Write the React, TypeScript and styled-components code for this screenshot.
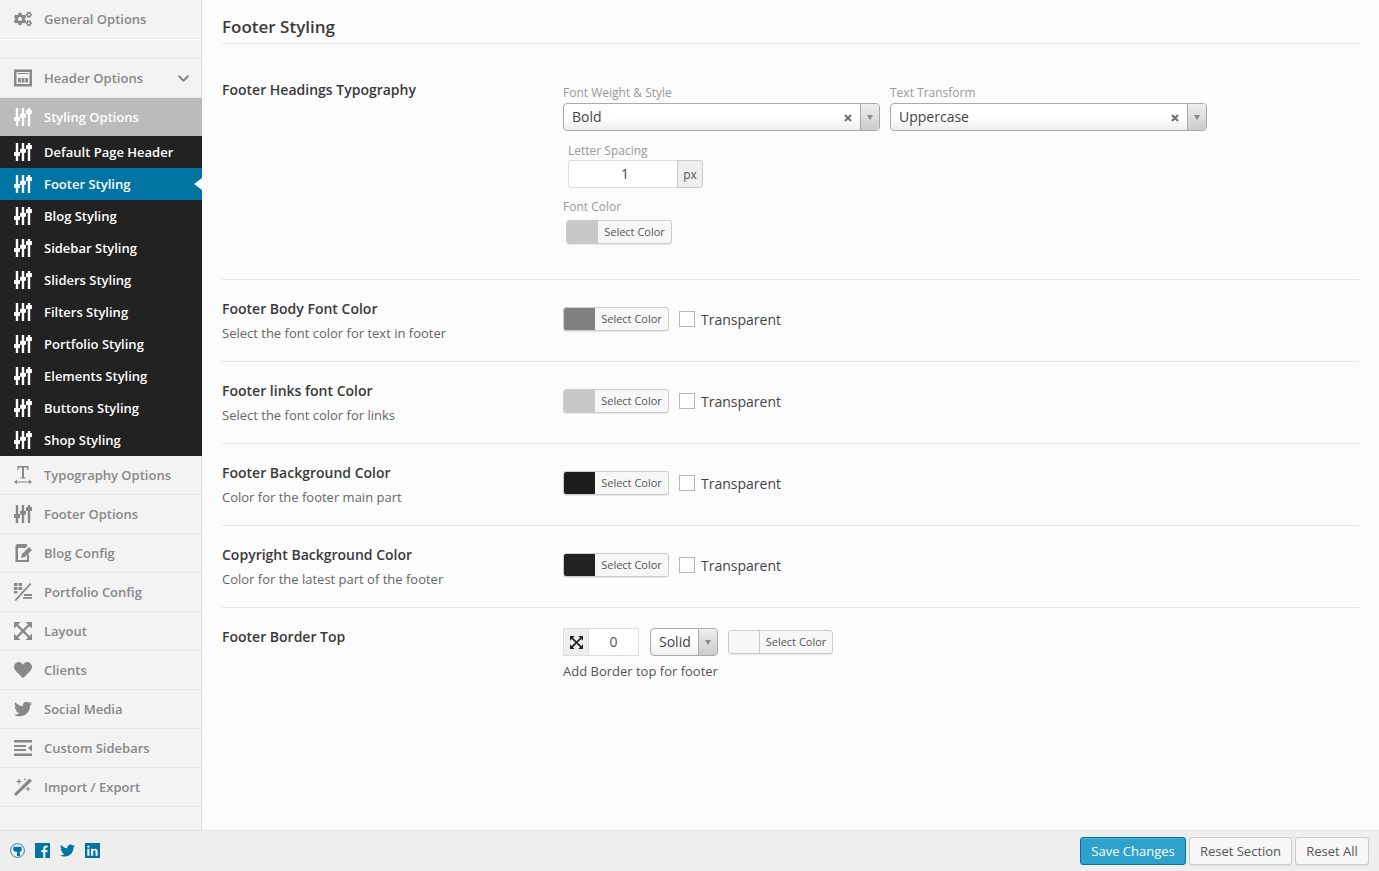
import React from "react";
import styled, { createGlobalStyle } from "styled-components";
import { FaCogs, FaHeart, FaTwitter, FaChevronDown } from "react-icons/fa";

const GlobalStyle = createGlobalStyle`
  * { box-sizing: border-box; }
  html, body { margin: 0; padding: 0; }
  body { font-family: "Open Sans", sans-serif; background: #fcfcfc; color: #444; }
`;

const Page = styled.div`
  width: 1379px;
  height: 871px;
  display: flex;
  flex-direction: column;
  overflow: hidden;
`;

const Top = styled.div`
  display: flex;
  height: 830px;
`;

const Sidebar = styled.nav`
  width: 202px;
  flex-shrink: 0;
  background: #f3f3f3;
  border-right: 1px solid #dcdcdc;
  display: flex;
  flex-direction: column;
`;

const Item = styled.div`
  height: 39px;
  margin-right: -1px;
  padding-left: 14px;
  padding-right: 11px;
  display: flex;
  align-items: center;
  gap: 12px;
  font-size: 13px;
  font-weight: 600;
  color: #888;
  border-bottom: 1px solid #e8e8e8;
  border-right: 1px solid #dcdcdc;
  & > svg:first-child { width: 18px; height: 18px; flex-shrink: 0; }
`;

const Spacer = styled.div`
  height: 20px;
  border-top: 1px solid #fafafa;
  border-bottom: 1px solid #e8e8e8;
`;

const Chevron = styled.span`
  margin-left: auto;
  display: flex;
  color: #888;
  font-size: 13px;
`;

const ActiveParent = styled.div`
  height: 38px;
  margin-right: -1px;
  padding-left: 14px;
  display: flex;
  align-items: center;
  gap: 12px;
  font-size: 13px;
  font-weight: 600;
  color: #fff;
  background: #bbb;
  & > svg { width: 18px; height: 18px; flex-shrink: 0; }
`;

const SubItem = styled.div<{ $active?: boolean }>`
  position: relative;
  height: 32px;
  margin-right: -1px;
  padding-left: 14px;
  display: flex;
  align-items: center;
  gap: 12px;
  font-size: 13px;
  font-weight: 600;
  color: #fff;
  background: ${(p) => (p.$active ? "#0074a2" : "#222")};
  & > svg { width: 18px; height: 18px; flex-shrink: 0; }
`;

const Arrow = styled.span`
  position: absolute;
  right: 0;
  top: 10px;
  border-style: solid;
  border-width: 6px 8px 6px 0;
  border-color: transparent #fcfcfc transparent transparent;
`;

const Main = styled.main`
  flex: 1;
  padding: 0 20px;
  background: #fcfcfc;
`;

const Title = styled.h2`
  margin: 0;
  height: 44px;
  padding-top: 15px;
  font-size: 17px;
  line-height: 24px;
  font-weight: 600;
  color: #3a3a3a;
  border-bottom: 1px solid #e7e7e7;
`;

const Row = styled.section<{ $height: number; $pad: number }>`
  height: ${(p) => p.$height}px;
  display: grid;
  grid-template-columns: 341px 1fr;
  align-items: start;
  padding-top: ${(p) => p.$pad}px;
  border-bottom: 1px solid #e7e7e7;
  &:last-child { border-bottom: none; }
`;

const RowLabel = styled.div`
  font-size: 14px;
  line-height: 20px;
  font-weight: 600;
  color: #3a3a3a;
`;

const RowDesc = styled.div`
  margin-top: 4px;
  font-size: 13px;
  line-height: 20px;
  font-weight: 400;
  color: #666;
`;

const Controls = styled.div<{ $top?: number }>`
  margin-top: ${(p) => p.$top ?? 0}px;
  display: flex;
  align-items: center;
`;

const FieldStack = styled.div`
  display: flex;
  flex-direction: column;
  margin-top: 5px;
`;

const SelectPair = styled.div`
  display: flex;
  gap: 10px;
`;

const FieldLabel = styled.div<{ $indent?: number; $top?: number }>`
  font-size: 12px;
  line-height: 16px;
  color: #999;
  margin-left: ${(p) => p.$indent ?? 0}px;
  margin-top: ${(p) => p.$top ?? 0}px;
`;

const SelectBox = styled.div<{ $width: number; $top?: number; $left?: number }>`
  width: ${(p) => p.$width}px;
  height: 28px;
  margin-top: ${(p) => p.$top ?? 0}px;
  margin-left: ${(p) => p.$left ?? 0}px;
  display: flex;
  align-items: center;
  padding-left: 8px;
  font-size: 14px;
  color: #444;
  border: 1px solid #aaa;
  border-radius: 4px;
  background: linear-gradient(to bottom, #fff 0%, #fff 50%, #eee 100%);
  flex-shrink: 0;
`;

const SelectText = styled.span`
  margin-top: -2px;
`;

const Clear = styled.span`
  margin-left: auto;
  margin-right: 8px;
  margin-top: 2px;
  display: flex;
  color: #777;
`;

const SelectArrow = styled.span<{ $auto?: boolean }>`
  width: 19px;
  height: 100%;
  margin-left: ${(p) => (p.$auto ? "auto" : "0")};
  flex-shrink: 0;
  display: flex;
  align-items: center;
  justify-content: center;
  border-left: 1px solid #aaa;
  border-radius: 0 3px 3px 0;
  background: linear-gradient(to bottom, #eee 0%, #ccc 100%);
  &::after {
    content: "";
    border-style: solid;
    border-width: 5px 3px 0 3px;
    border-color: #888 transparent transparent transparent;
  }
`;

const SpacingWrap = styled.div`
  display: flex;
  width: 135px;
  height: 28px;
  margin: 1px 0 0 5px;
`;

const SpacingValue = styled.div`
  flex: 1;
  display: flex;
  align-items: center;
  justify-content: center;
  padding-left: 4px;
  padding-bottom: 2px;
  font-size: 14px;
  color: #444;
  background: #fff;
  border: 1px solid #ddd;
  border-right: none;
  border-radius: 3px 0 0 3px;
`;

const Unit = styled.div`
  width: 26px;
  display: flex;
  align-items: center;
  justify-content: center;
  font-size: 12px;
  color: #555;
  background: #eee;
  border: 1px solid #ccc;
  border-radius: 0 3px 3px 0;
`;

const ColorButton = styled.div<{ $indent?: number; $top?: number; $plain?: boolean }>`
  width: ${(p) => (p.$plain ? 105 : 106)}px;
  height: 24px;
  margin-left: ${(p) => p.$indent ?? 0}px;
  margin-top: ${(p) => p.$top ?? 0}px;
  display: flex;
  flex-shrink: 0;
  overflow: hidden;
  background: #f7f7f7;
  border: 1px solid #ccc;
  border-radius: 3px;
  box-shadow: 0 1px 0 rgba(0, 0, 0, 0.08);
`;

const Swatch = styled.span<{ $color: string }>`
  width: 31px;
  height: 100%;
  flex-shrink: 0;
  background: ${(p) => p.$color};
  border-right: 1px solid ${(p) => (p.$color === "#f7f7f7" ? "#ccc" : p.$color)};
`;

const ColorText = styled.span`
  flex: 1;
  display: flex;
  align-items: center;
  justify-content: center;
  padding-bottom: 2px;
  font-size: 11px;
  color: #555;
`;

const Check = styled.span`
  width: 16px;
  height: 16px;
  margin-left: 10px;
  background: #fff;
  border: 1px solid #b4b9be;
`;

const CheckText = styled.span`
  margin-left: 6px;
  font-size: 14px;
  color: #444;
`;

const DimBox = styled.div`
  width: 76px;
  height: 28px;
  display: flex;
  flex-shrink: 0;
  background: #fff;
  border: 1px solid #ddd;
`;

const DimIcon = styled.span`
  width: 25px;
  display: flex;
  align-items: center;
  justify-content: center;
  background: #eee;
  border-right: 1px solid #ddd;
  color: #222;
  & > svg { width: 13px; height: 13px; }
`;

const DimValue = styled.span`
  flex: 1;
  display: flex;
  align-items: center;
  justify-content: center;
  padding-bottom: 2px;
  font-size: 14px;
  color: #555;
`;

const Hint = styled.div`
  margin-top: 6px;
  font-size: 13px;
  line-height: 18px;
  color: #555;
`;

const BottomBar = styled.footer`
  height: 41px;
  display: flex;
  align-items: center;
  padding: 0 10px;
  background: #eee;
  border-top: 1px solid #e4e4e4;
`;

const Socials = styled.div`
  display: flex;
  gap: 10px;
  margin-top: -1px;
  color: #0074a2;
  & > svg { width: 15px; height: 15px; }
`;

const Buttons = styled.div`
  margin-left: auto;
  display: flex;
  gap: 3px;
`;

const Button = styled.button<{ $primary?: boolean; $width: number }>`
  width: ${(p) => p.$width}px;
  height: 28px;
  padding: 0;
  font-family: inherit;
  font-size: 13px;
  color: ${(p) => (p.$primary ? "#fff" : "#555")};
  background: ${(p) => (p.$primary ? "#2ea2cc" : "#f7f7f7")};
  border: 1px solid ${(p) => (p.$primary ? "#0074a2" : "#ccc")};
  border-radius: 3px;
  box-shadow: ${(p) =>
    p.$primary ? "inset 0 1px 0 rgba(120, 200, 230, 0.5)" : "0 1px 0 rgba(0, 0, 0, 0.08)"};
`;

// knobs sit edge to edge across the icon, as in the elusive "adjust" glyph
const SlidersIcon = () => (
  <svg viewBox="0 0 18 18" fill="currentColor">
    <rect x="1.800" y="0" width="2.400" height="18" />
    <rect x="7.800" y="0" width="2.400" height="18" />
    <rect x="13.800" y="0" width="2.400" height="18" />
    <rect x="0" y="9" width="6" height="4" rx="0.600" />
    <rect x="6" y="5.800" width="6" height="4" rx="0.600" />
    <rect x="12" y="2" width="6" height="4" rx="0.600" />
  </svg>
);

const HeaderIcon = () => (
  <svg viewBox="0 0 18 18" fill="currentColor">
    <path fillRule="evenodd" d="M0 .5h18v17H0zM2.500 3v12h13V3z" />
    <rect x="3.500" y="4" width="11" height="1" />
    <rect x="4" y="9" width="2.800" height="4.500" />
    <rect x="7.600" y="9" width="2.800" height="4.500" />
    <rect x="11.200" y="9" width="2.800" height="4.500" />
  </svg>
);

const TypographyIcon = () => (
  <svg viewBox="0 0 18 18" fill="currentColor">
    <path d="M3.500 0h11v4h-1l-.7-2.400H10v9.600l1.600.5v.8H6.400v-.8l1.600-.5V1.600H5.200L4.500 4h-1z" />
    <path d="M0 16l3-2.200v1.600h12v-1.600l3 2.200-3 2.200v-1.600H3v1.600z" />
  </svg>
);

const BlogIcon = () => (
  <svg viewBox="0 0 18 18" fill="currentColor">
    <path d="M3 0h10v2.500L11.500 4H4v12h9v-4.500l2-2V18H1.500V1.500z" />
    <path d="M15 3l3 3-7 7-4 1 1-4z" />
  </svg>
);

const PortfolioIcon = () => (
  <svg viewBox="0 0 18 18" fill="currentColor">
    <rect x="0" y="0" width="3.500" height="3" />
    <rect x="4.500" y="0" width="3.500" height="3" />
    <rect x="0" y="4" width="3.500" height="3" />
    <rect x="4.500" y="4" width="3.500" height="3" />
    <rect x="0" y="8" width="3.500" height="2.500" />
    <path d="M16 0l1.500 1L2 18 .5 17z" />
    <rect x="10" y="11" width="8" height="2" />
    <rect x="9" y="14" width="9" height="1.800" />
  </svg>
);

const ArrowsIcon = () => (
  <svg viewBox="0 0 18 18" fill="currentColor">
    <path d="M2.500 2.500l13 13M15.500 2.500l-13 13" stroke="currentColor" strokeWidth="2.400" fill="none" />
    <path d="M0 0h6.500L0 6.500zM18 0v6.500L11.500 0zM0 18v-6.500L6.500 18zM18 18h-6.500l6.500-6.500z" />
  </svg>
);

const SidebarsIcon = () => (
  <svg viewBox="0 0 18 18" fill="currentColor">
    <rect x="0" y="1" width="18" height="2.500" />
    <rect x="0" y="6" width="12" height="2" />
    <rect x="0" y="10" width="12" height="2" />
    <rect x="0" y="14.500" width="18" height="2.500" />
    <path d="M18 5.500v7L14 9z" />
  </svg>
);

const WandIcon = () => (
  <svg viewBox="0 0 18 18" fill="currentColor">
    <path d="M15.500 0.500L18 3 2 18l-2-2z" />
    <path d="M5 0l.8 2.700L8.500 3.500l-2.700.8L5 7l-.8-2.700L1.500 3.500l2.700-.8z" />
    <path d="M14 8l.7 2.300L17 11l-2.300.7L14 14l-.7-2.300L11 11l2.300-.7z" />
    <path d="M11 0l.4 1.100 1.100.4-1.100.4L11 3l-.4-1.100-1.100-.4 1.100-.4z" />
  </svg>
);

const GithubCircle = () => (
  <svg viewBox="0 0 16 16" fill="currentColor">
    <circle cx="8" cy="8" r="7.400" fill="none" stroke="currentColor" strokeWidth="0.900" />
    <path d="M4 3.500l1.500.8c1.600-.5 3.400-.5 5 0l1.500-.8.300 2.200c.7 1.600.2 3.600-2.300 4.100.5.400.6 1 .6 1.600v2.400H7.400v-2.400c0-.6.100-1.200.6-1.600C3.500 9.300 3 7.300 3.700 5.700z" />
  </svg>
);

const FacebookIcon = () => (
  <svg viewBox="0 0 15 15" fill="currentColor">
    <path
      fillRule="evenodd"
      d="M0 0h15v15H0zM10.400 15V9.300h1.900l.3-2.200h-2.200V5.700c0-.6.200-1 1.100-1h1.100v-2C12.400 2.600 11.800 2.600 11 2.600c-1.700 0-2.800 1-2.800 2.900v1.600H6.300v2.200h1.900V15z"
    />
  </svg>
);

const LinkedinIcon = () => (
  <svg viewBox="0 0 15 15" fill="currentColor">
    <path
      fillRule="evenodd"
      d="M0 0h15v15H0zM2.300 5.800v6.900h2.200V5.800zM3.400 2.400a1.200 1.200 0 1 0 0 2.400 1.200 1.200 0 0 0 0-2.400zM6 5.800v6.900h2.200V9c0-1 .4-1.500 1.200-1.500s1.100.6 1.100 1.500v3.700h2.200V8.700c0-2-1-3-2.500-3-1 0-1.700.5-2 1.100v-1z"
    />
  </svg>
);

const ClearIcon = () => (
  <svg width="8" height="8" viewBox="0 0 8 8" fill="none" stroke="currentColor" strokeWidth="2.300">
    <path d="M1 1l6 6M7 1L1 7" />
  </svg>
);

const subItems = [
  "Default Page Header",
  "Footer Styling",
  "Blog Styling",
  "Sidebar Styling",
  "Sliders Styling",
  "Filters Styling",
  "Portfolio Styling",
  "Elements Styling",
  "Buttons Styling",
  "Shop Styling",
];

const lowerItems = [
  { label: "Typography Options", icon: <TypographyIcon /> },
  { label: "Footer Options", icon: <SlidersIcon /> },
  { label: "Blog Config", icon: <BlogIcon /> },
  { label: "Portfolio Config", icon: <PortfolioIcon /> },
  { label: "Layout", icon: <ArrowsIcon /> },
  { label: "Clients", icon: <FaHeart /> },
  { label: "Social Media", icon: <FaTwitter /> },
  { label: "Custom Sidebars", icon: <SidebarsIcon /> },
  { label: "Import / Export", icon: <WandIcon /> },
];

const colorRows = [
  { label: "Footer Body Font Color", desc: "Select the font color for text in footer", color: "#808080" },
  { label: "Footer links font Color", desc: "Select the font color for links", color: "#c8c8c8" },
  { label: "Footer Background Color", desc: "Color for the footer main part", color: "#1c1c1c" },
  { label: "Copyright Background Color", desc: "Color for the latest part of the footer", color: "#222222" },
];

const App: React.FC = () => {
  return (
    <Page>
      <GlobalStyle />
      <Top>
        <Sidebar>
          <Item>
            <FaCogs />
            General Options
          </Item>
          <Spacer />
          <Item>
            <HeaderIcon />
            Header Options
            <Chevron>
              <FaChevronDown />
            </Chevron>
          </Item>
          <ActiveParent>
            <SlidersIcon />
            Styling Options
          </ActiveParent>
          {subItems.map((name) => (
            <SubItem key={name} $active={name === "Footer Styling"}>
              <SlidersIcon />
              {name}
              {name === "Footer Styling" && <Arrow />}
            </SubItem>
          ))}
          {lowerItems.map((item) => (
            <Item key={item.label}>
              {item.icon}
              {item.label}
            </Item>
          ))}
        </Sidebar>

        <Main>
          <Title>Footer Styling</Title>

          <Row $height={236} $pad={36}>
            <RowLabel>Footer Headings Typography</RowLabel>
            <FieldStack>
              <SelectPair>
                <div>
                  <FieldLabel>Font Weight &amp; Style</FieldLabel>
                  <SelectBox $width={317} $top={2}>
                    <SelectText>Bold</SelectText>
                    <Clear>
                      <ClearIcon />
                    </Clear>
                    <SelectArrow />
                  </SelectBox>
                </div>
                <div>
                  <FieldLabel>Text Transform</FieldLabel>
                  <SelectBox $width={317} $top={2}>
                    <SelectText>Uppercase</SelectText>
                    <Clear>
                      <ClearIcon />
                    </Clear>
                    <SelectArrow />
                  </SelectBox>
                </div>
              </SelectPair>
              <FieldLabel $indent={5} $top={12}>
                Letter Spacing
              </FieldLabel>
              <SpacingWrap>
                <SpacingValue>1</SpacingValue>
                <Unit>px</Unit>
              </SpacingWrap>
              <FieldLabel $top={11}>Font Color</FieldLabel>
              <ColorButton $indent={3} $top={5}>
                <Swatch $color="#c8c8c8" />
                <ColorText>Select Color</ColorText>
              </ColorButton>
            </FieldStack>
          </Row>

          {colorRows.map((row) => (
            <Row key={row.label} $height={82} $pad={19}>
              <div>
                <RowLabel>{row.label}</RowLabel>
                <RowDesc>{row.desc}</RowDesc>
              </div>
              <Controls $top={8}>
                <ColorButton>
                  <Swatch $color={row.color} />
                  <ColorText>Select Color</ColorText>
                </ColorButton>
                <Check />
                <CheckText>Transparent</CheckText>
              </Controls>
            </Row>
          ))}

          <Row $height={100} $pad={19}>
            <RowLabel>Footer Border Top</RowLabel>
            <div>
              <Controls $top={1}>
                <DimBox>
                  <DimIcon>
                    <ArrowsIcon />
                  </DimIcon>
                  <DimValue>0</DimValue>
                </DimBox>
                <SelectBox $width={68} $left={11}>
                  <SelectText>Solid</SelectText>
                  <SelectArrow $auto />
                </SelectBox>
                <ColorButton $plain $indent={10}>
                  <Swatch $color="#f7f7f7" />
                  <ColorText>Select Color</ColorText>
                </ColorButton>
              </Controls>
              <Hint>Add Border top for footer</Hint>
            </div>
          </Row>
        </Main>
      </Top>

      <BottomBar>
        <Socials>
          <GithubCircle />
          <FacebookIcon />
          <FaTwitter />
          <LinkedinIcon />
        </Socials>
        <Buttons>
          <Button $primary $width={106}>
            Save Changes
          </Button>
          <Button $width={103}>Reset Section</Button>
          <Button $width={74}>Reset All</Button>
        </Buttons>
      </BottomBar>
    </Page>
  );
};

export default App;
